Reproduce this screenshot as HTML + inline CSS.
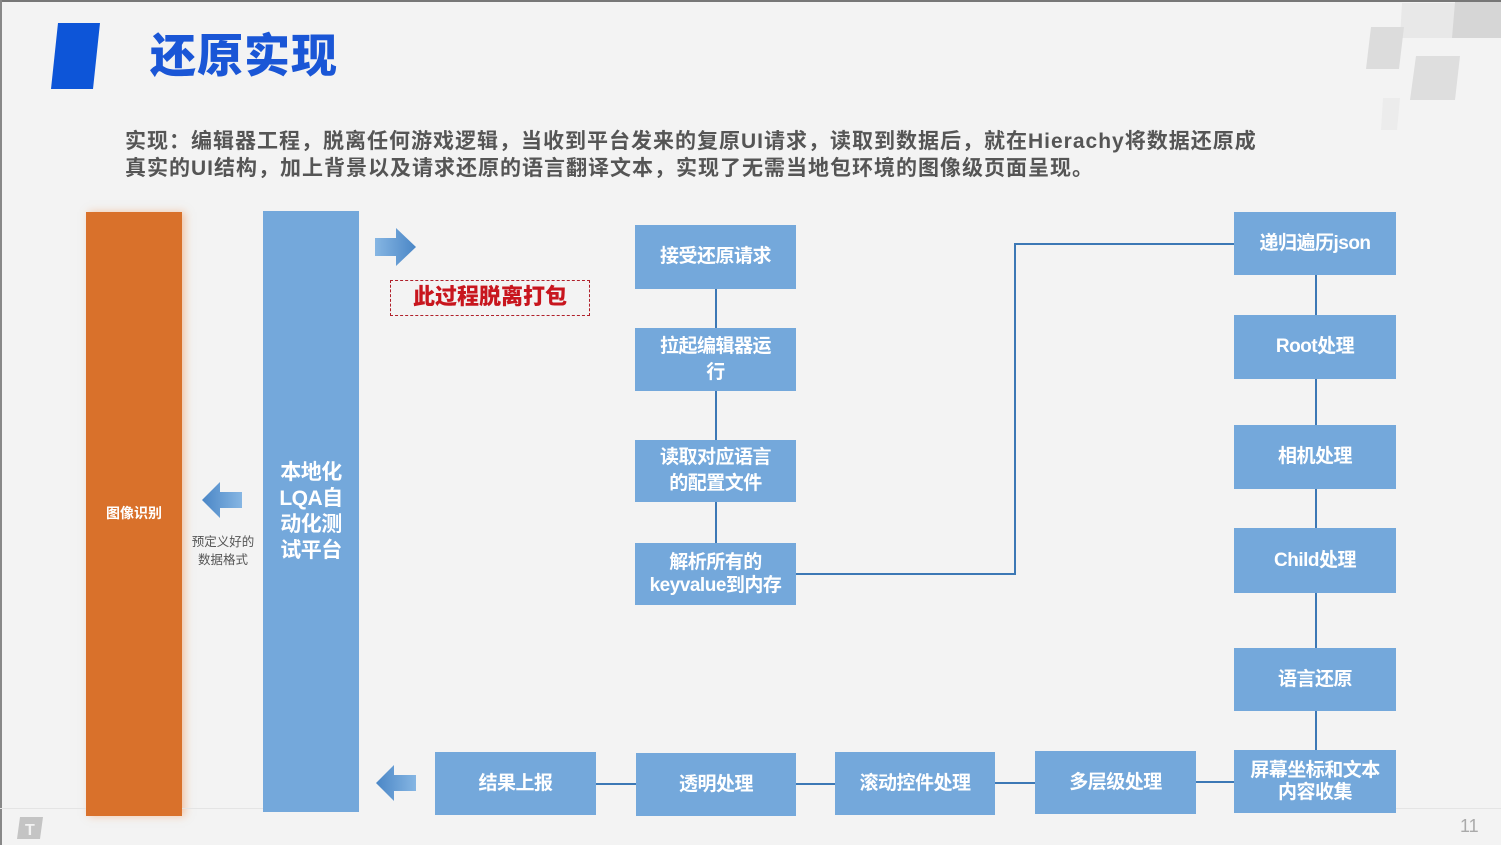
<!DOCTYPE html>
<html><head><meta charset="utf-8"><style>
*{margin:0;padding:0;box-sizing:border-box}
body{width:1501px;height:845px;background:#f3f3f3;position:relative;overflow:hidden;font-family:"Liberation Sans","Noto Sans CJK SC",sans-serif}
.a{position:absolute}
.b{position:absolute;background:#74a8db;color:#fff;font-weight:700;display:flex;align-items:center;justify-content:center;text-align:center;font-size:19px;line-height:26px;letter-spacing:-0.5px}
.l{position:absolute;background:#3c78b5}
</style></head><body>
<div class="a" style="left:0;top:0;width:1501px;height:2px;background:#777"></div>
<div class="a" style="left:0;top:0;width:2px;height:845px;background:#888"></div>
<svg class="a" style="left:1360px;top:0" width="141" height="140">
<polygon points="42,3 100,3 96,38 40,38" fill="#e8e8e8"/>
<polygon points="95,2 141,2 141,38 92,38" fill="#d6d6d6"/>
<polygon points="11,27 44,27 39,69 6,69" fill="#dcdcdc"/>
<polygon points="56,56 100,56 95,100 50,100" fill="#dedede"/>
<polygon points="23,98 40,98 37,130 21,130" fill="#ececec"/>
</svg>
<svg class="a" style="left:50px;top:22px" width="52" height="68"><polygon points="8,1 50,1 43,67 1,67" fill="#0d55d8"/></svg>
<div class="a" style="left:150px;top:20px;font-size:46px;font-weight:900;color:#1a56d6;letter-spacing:1px">还原实现</div>
<div class="a" style="left:125px;top:128px;font-size:21px;font-weight:700;color:#555;line-height:27px;white-space:nowrap;letter-spacing:1px">实现：编辑器工程，脱离任何游戏逻辑，当收到平台发来的复原UI请求，读取到数据后，就在Hierachy将数据还原成<br>真实的UI结构，加上背景以及请求还原的语言翻译文本，实现了无需当地包环境的图像级页面呈现。</div>

<div class="a" style="left:86px;top:212px;width:96px;height:604px;background:#d9712b;box-shadow:3px 0 8px rgba(240,150,90,.5)"></div>
<div class="a" style="left:86px;top:503px;width:96px;text-align:center;color:#fff;font-weight:700;font-size:14px">图像识别</div>
<div class="b" style="left:263px;top:211px;width:96px;height:601px;font-size:21px;line-height:26px;padding:0 10px">本地化LQA自动化测试平台</div>

<svg class="a" style="left:200px;top:480px" width="44" height="40"><defs><linearGradient id="g" x1="0" x2="1"><stop offset="0" stop-color="#4a86c6"/><stop offset="1" stop-color="#86b6e3"/></linearGradient></defs><polygon points="2,20 20,2 20,12 42,12 42,28 20,28 20,38" fill="url(#g)"/></svg>
<div class="a" style="left:186px;top:533px;width:74px;text-align:center;font-size:12.5px;color:#555;line-height:18px">预定义好的<br>数据格式</div>
<svg class="a" style="left:374px;top:226px" width="44" height="42"><defs><linearGradient id="g2" x1="0" x2="1"><stop offset="0" stop-color="#86b6e3"/><stop offset="1" stop-color="#4a86c6"/></linearGradient></defs><polygon points="42,21 22,2 22,12 1,12 1,30 22,30 22,40" fill="url(#g2)"/></svg>
<svg class="a" style="left:374px;top:763px" width="44" height="40"><polygon points="2,20 20,2 20,12 42,12 42,28 20,28 20,38" fill="url(#g)"/></svg>

<div class="a" style="left:390px;top:280px;width:200px;height:36px;border:1.5px dashed #b0202a;color:#c8161e;font-weight:900;font-size:22px;text-align:center;line-height:32px">此过程脱离打包</div>

<div class="b" style="left:635px;top:225px;width:161px;height:64px">接受还原请求</div>
<div class="b" style="left:635px;top:328px;width:161px;height:63px">拉起编辑器运<br>行</div>
<div class="b" style="left:635px;top:440px;width:161px;height:62px">读取对应语言<br>的配置文件</div>
<div class="b" style="left:635px;top:543px;width:161px;height:62px;line-height:23px">解析所有的<br>keyvalue到内存</div>
<div class="l" style="left:715px;top:289px;width:2px;height:39px"></div>
<div class="l" style="left:715px;top:391px;width:2px;height:49px"></div>
<div class="l" style="left:715px;top:502px;width:2px;height:41px"></div>
<div class="l" style="left:796px;top:573px;width:220px;height:2px"></div>
<div class="l" style="left:1014px;top:243px;width:2px;height:332px"></div>
<div class="l" style="left:1014px;top:243px;width:220px;height:2px"></div>

<div class="b" style="left:1234px;top:212px;width:162px;height:63px">递归遍历json</div>
<div class="b" style="left:1234px;top:315px;width:162px;height:64px">Root处理</div>
<div class="b" style="left:1234px;top:425px;width:162px;height:64px">相机处理</div>
<div class="b" style="left:1234px;top:528px;width:162px;height:65px">Child处理</div>
<div class="b" style="left:1234px;top:648px;width:162px;height:63px">语言还原</div>
<div class="b" style="left:1234px;top:750px;width:162px;height:63px;line-height:22px">屏幕坐标和文本<br>内容收集</div>
<div class="l" style="left:1315px;top:275px;width:2px;height:40px"></div>
<div class="l" style="left:1315px;top:379px;width:2px;height:46px"></div>
<div class="l" style="left:1315px;top:489px;width:2px;height:39px"></div>
<div class="l" style="left:1315px;top:593px;width:2px;height:55px"></div>
<div class="l" style="left:1315px;top:711px;width:2px;height:39px"></div>

<div class="b" style="left:435px;top:752px;width:161px;height:63px">结果上报</div>
<div class="b" style="left:636px;top:753px;width:160px;height:63px">透明处理</div>
<div class="b" style="left:835px;top:752px;width:160px;height:63px">滚动控件处理</div>
<div class="b" style="left:1035px;top:751px;width:161px;height:63px">多层级处理</div>
<div class="l" style="left:596px;top:783px;width:40px;height:2px"></div>
<div class="l" style="left:796px;top:783px;width:39px;height:2px"></div>
<div class="l" style="left:995px;top:782px;width:40px;height:2px"></div>
<div class="l" style="left:1196px;top:781px;width:38px;height:2px"></div>

<div class="a" style="left:0;top:808px;width:86px;height:1px;background:#e4e4e4"></div>
<div class="a" style="left:182px;top:808px;width:81px;height:1px;background:#e4e4e4"></div>
<div class="a" style="left:1396px;top:808px;width:105px;height:1px;background:#e4e4e4"></div>
<svg class="a" style="left:16px;top:816px" width="28" height="24"><polygon points="4,1 27,1 24,23 1,23" fill="#c4c4c4"/><text x="9" y="19" font-size="16" font-weight="700" fill="#f3f3f3" font-family="Liberation Sans">T</text></svg>
<div class="a" style="left:1460px;top:816px;font-size:18px;color:#aaa">11</div>
</body></html>
